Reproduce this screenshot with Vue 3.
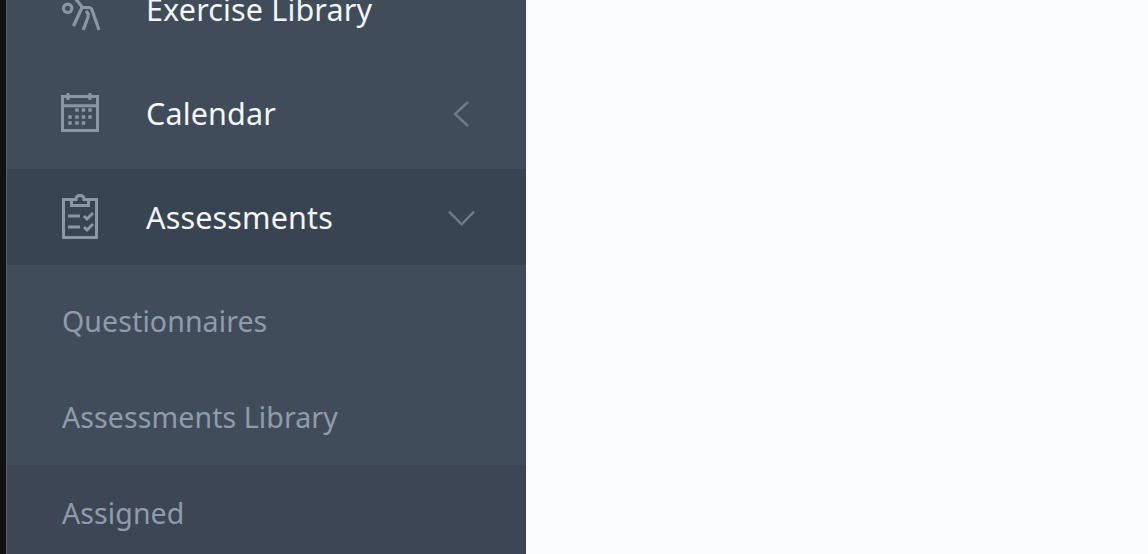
<template>
  <div class="page">
    <div class="strip"></div>
    <aside class="sidebar">
      <div class="menu-item first">
        <svg class="menu-icon" viewBox="0 0 40 44" fill="none" stroke="#8c97a5" stroke-width="3.2">
          <circle cx="7.7" cy="21.3" r="4.2" />
          <path d="M15 11 L22.5 20.5 H29 Q31 20.5 32 23 L39 43" />
          <path d="M13.5 39 L22 20.5" />
          <path d="M23.3 43 L28 30 Q29 26.5 26 24" />
        </svg>
        <span class="menu-label">Exercise Library</span>
      </div>
      <div class="menu-item">
        <svg class="menu-icon" viewBox="0 0 40 44" fill="none" stroke="#8c97a5">
          <path d="M2.5 5.5 H37.5 V39.5 H2.5 Z M2.5 14.7 H37.5" stroke-width="3" />
          <path d="M8 2 V9 M30 2 V9" stroke-width="3" />
          <path
            d="M15.3 17.3h3.4v3.4h-3.4z M21.8 17.3h3.4v3.4h-3.4z M28.3 17.3h3.4v3.4h-3.4z M8.3 24.3h3.4v3.4h-3.4z M15.3 24.3h3.4v3.4h-3.4z M21.8 24.3h3.4v3.4h-3.4z M28.3 24.3h3.4v3.4h-3.4z M8.3 30.3h3.4v3.4h-3.4z M15.3 30.3h3.4v3.4h-3.4z M21.8 30.3h3.4v3.4h-3.4z"
            fill="#8c97a5"
            stroke="none"
          />
        </svg>
        <span class="menu-label">Calendar</span>
        <svg class="chevron" viewBox="0 0 28 28" fill="none" stroke="#6f7987" stroke-width="2.4">
          <path d="M22 3 L9 15 L22 27" />
        </svg>
      </div>
      <div class="menu-item open">
        <svg class="menu-icon" viewBox="0 0 40 44" fill="none" stroke="#8c97a5" stroke-width="3">
          <path d="M10 4.5 H3.5 V42.5 H36.5 V4.5 H30" />
          <path d="M11.5 4.5 V10.5 H28.5 V4.5 H24 Q24 0.5 20 0.5 Q16 0.5 16 4.5 Z" />
          <path d="M8 21 H20 M8 32 H20" />
          <path d="M24 21 L27 24 L33 18 M24 32 L27 35 L33 29" />
        </svg>
        <span class="menu-label">Assessments</span>
        <svg class="chevron" viewBox="0 0 28 28" fill="none" stroke="#6f7987" stroke-width="2.4">
          <path d="M3 8.7 L15.7 21.3 L28 8.7" />
        </svg>
      </div>
      <div class="submenu">
        <div class="sub-item">Questionnaires</div>
        <div class="sub-item">Assessments Library</div>
        <div class="sub-item active">Assigned</div>
      </div>
    </aside>
    <main class="content"></main>
  </div>
</template>

<script setup>
</script>

<style>
html,
body {
  margin: 0;
  overflow: hidden;
}
</style>

<style scoped>
.page {
  display: flex;
  width: 1148px;
  height: 554px;
  overflow: hidden;
  font-family: "Noto Sans", Lato, sans-serif;
}

.strip {
  width: 6px;
  background: #101113;
}

.sidebar {
  width: 520px;
  height: 600px;
  box-sizing: border-box;
  border-left: 1px solid #566170;
  background: #414c5b;
  margin-top: -39px;
  flex-shrink: 0;
}

.content {
  flex: 1;
  background: #fbfcfe;
}

.menu-item {
  display: flex;
  align-items: center;
  height: 96px;
  margin-bottom: 8px;
  padding: 0 52px 0 53px;
  color: #fff;
}

.menu-item.open {
  background: #394453;
}

.menu-icon {
  width: 40px;
  height: 44px;
  flex-shrink: 0;
  margin-right: 46px;
  overflow: visible;
}

.menu-label {
  flex: 1;
  font-size: 30.5px;
  letter-spacing: 0.15px;
  line-height: 40px;
  color: #f3f5f7;
}

.chevron {
  width: 28px;
  height: 28px;
  overflow: visible;
}

.sub-item {
  height: 96px;
  line-height: 97px;
  padding-left: 55px;
  font-size: 28.5px;
  letter-spacing: 0.1px;
  color: #8f9cac;
}

.sub-item.active {
  background: #3c4655;
}
</style>
